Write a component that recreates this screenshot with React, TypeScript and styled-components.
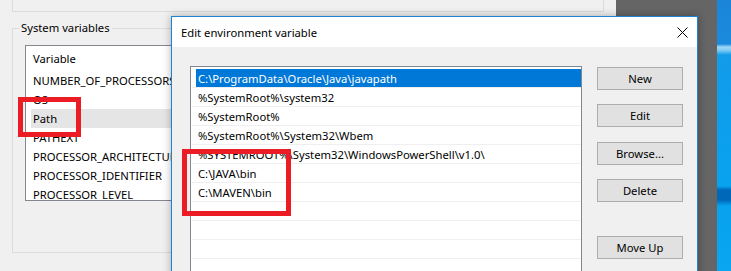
import React from "react";
import styled, { createGlobalStyle } from "styled-components";

const GlobalStyle = createGlobalStyle`
    html,
    body {
        margin: 0;
        padding: 0;
    }
    body {
        width: 731px;
        height: 271px;
        overflow: hidden;
        background: #f0f0f0;
        font-family: "Noto Sans", "Segoe UI", sans-serif;
        font-size: 11.25px;
        color: #000;
    }
`;

const variables = [
    "NUMBER_OF_PROCESSORS",
    "OS",
    "Path",
    "PATHEXT",
    "PROCESSOR_ARCHITECTURE",
    "PROCESSOR_IDENTIFIER",
    "PROCESSOR_LEVEL",
];

const paths = [
    "C:\\ProgramData\\Oracle\\Java\\javapath",
    "%SystemRoot%\\system32",
    "%SystemRoot%",
    "%SystemRoot%\\System32\\Wbem",
    "%SYSTEMROOT%\\System32\\WindowsPowerShell\\v1.0\\",
    "C:\\JAVA\\bin",
    "C:\\MAVEN\\bin",
    "",
    "",
    "",
    "",
];

const buttons = [
    { label: "New", gap: 0 },
    { label: "Edit", gap: 14 },
    { label: "Browse...", gap: 15 },
    { label: "Delete", gap: 14 },
    { label: "Move Up", gap: 34 },
];

const CloseIcon = () => (
    <svg width="11" height="11" viewBox="0 0 11 11">
        <path d="M0.5 0.5L10.5 10.5M10.5 0.5L0.5 10.5" stroke="#000" strokeWidth="1" />
    </svg>
);

const App = () => {
    return (
        <>
            <GlobalStyle />
            <Screen>
                <MainWindow>
                    <UpperGroup />
                    <GroupBox>
                        <Legend>System variables</Legend>
                        <VarList>
                            <VarHeader>Variable</VarHeader>
                            {variables.map((name) => (
                                <VarRow key={name} $selected={name === "Path"}>
                                    {name}
                                </VarRow>
                            ))}
                        </VarList>
                    </GroupBox>
                </MainWindow>
                <DarkStrip />
                <Desktop />

                <Dialog>
                    <TitleBar>
                        <span>Edit environment variable</span>
                        <CloseIcon />
                    </TitleBar>
                    <DialogBody>
                        <PathList>
                            {paths.map((p, i) => (
                                <PathRow key={i}>
                                    <PathCell $selected={i === 0}>{p}</PathCell>
                                </PathRow>
                            ))}
                        </PathList>
                        <ButtonColumn>
                            {buttons.map((b) => (
                                <Button key={b.label} $gap={b.gap}>
                                    {b.label}
                                </Button>
                            ))}
                        </ButtonColumn>
                    </DialogBody>
                </Dialog>

                <Marker $x={18} $y={97} $w={63} $h={40} />
                <Marker $x={182} $y={149} $w={109} $h={67} />
            </Screen>
        </>
    );
};

export default App;

const Screen = styled.div`
    position: relative;
    display: flex;
    width: 731px;
    height: 271px;
    overflow: hidden;
`;

const MainWindow = styled.div`
    flex: none;
    width: 616px;
    display: flex;
    flex-direction: column;
    background: #f0f0f0;
`;

const UpperGroup = styled.div`
    margin-left: 12px;
    width: 592px;
    height: 12px;
    box-sizing: border-box;
    border: 1px solid #dcdcdc;
    border-top: none;
`;

const GroupBox = styled.fieldset`
    margin: 9px 0 0 12px;
    padding: 10px 0 0 0;
    width: 592px;
    height: 232px;
    min-width: 0;
    box-sizing: border-box;
    border: 1px solid #dcdcdc;
`;

const Legend = styled.legend`
    margin-left: 6px;
    padding: 0 2px;
    line-height: 14px;
    font-size: 11.25px;
`;

const VarList = styled.div`
    margin-left: 12px;
    width: 560px;
    height: 156px;
    box-sizing: border-box;
    border: 1px solid #828790;
    background: #fff;
    overflow: hidden;
`;

const VarHeader = styled.div`
    height: 25px;
    padding-left: 7px;
    display: flex;
    align-items: center;
`;

const VarRow = styled.div<{ $selected: boolean }>`
    height: 19px;
    margin-left: 5px;
    padding-left: 2px;
    display: flex;
    align-items: center;
    white-space: nowrap;
    background: ${({ $selected }) => ($selected ? "#e5e5e5" : "transparent")};
`;

const DarkStrip = styled.div`
    flex: none;
    width: 101px;
    background: #656565;
`;

const Desktop = styled.div`
    flex: 1;
    background: linear-gradient(
        to bottom,
        #1b86d8 0,
        #1b8ade 44px,
        #9fd8f6 47px,
        #84cdf3 50px,
        #129be9 55px,
        #08a2ef 186px,
        #0068b9 190px,
        #0068b9 200px,
        #08a2ef 206px,
        #0aa6f1 100%
    );
`;

const Dialog = styled.div`
    position: absolute;
    left: 171px;
    top: 16px;
    width: 527px;
    height: 270px;
    box-sizing: border-box;
    border: 1px solid #1c83d6;
    background: #f0f0f0;
    box-shadow: 0 0 8px rgba(0, 0, 0, 0.3);
    display: flex;
    flex-direction: column;
`;

const TitleBar = styled.div`
    flex: none;
    height: 30px;
    padding: 0 9px;
    background: #fff;
    display: flex;
    align-items: center;
    justify-content: space-between;
`;

const DialogBody = styled.div`
    flex: 1;
    display: flex;
    gap: 15px;
    padding: 19px 14px 0 18px;
`;

const PathList = styled.div`
    flex: none;
    width: 392px;
    box-sizing: border-box;
    border: 1px solid #828790;
    border-bottom: none;
    background: #fff;
    padding: 2px 0 0 1px;
`;

const PathRow = styled.div`
    height: 19px;
    box-sizing: border-box;
    border-bottom: 1px solid #efefef;
    display: flex;
`;

const PathCell = styled.div<{ $selected: boolean }>`
    flex: 1;
    margin-left: 4px;
    padding-left: 2px;
    display: flex;
    align-items: center;
    white-space: nowrap;
    background: ${({ $selected }) => ($selected ? "#0078d7" : "transparent")};
    color: ${({ $selected }) => ($selected ? "#fff" : "#000")};
`;

const ButtonColumn = styled.div`
    flex: none;
    width: 86px;
    padding-top: 1px;
    display: flex;
    flex-direction: column;
`;

const Button = styled.button<{ $gap: number }>`
    height: 23px;
    margin: ${({ $gap }) => $gap}px 0 0 0;
    padding: 0;
    box-sizing: border-box;
    border: 1px solid #adadad;
    background: #e1e1e1;
    font-family: inherit;
    font-size: 11.25px;
    color: #000;
`;

const Marker = styled.div<{ $x: number; $y: number; $w: number; $h: number }>`
    position: absolute;
    left: ${({ $x }) => $x}px;
    top: ${({ $y }) => $y}px;
    width: ${({ $w }) => $w}px;
    height: ${({ $h }) => $h}px;
    box-sizing: border-box;
    border: 5px solid #ec1c24;
    pointer-events: none;
`;
